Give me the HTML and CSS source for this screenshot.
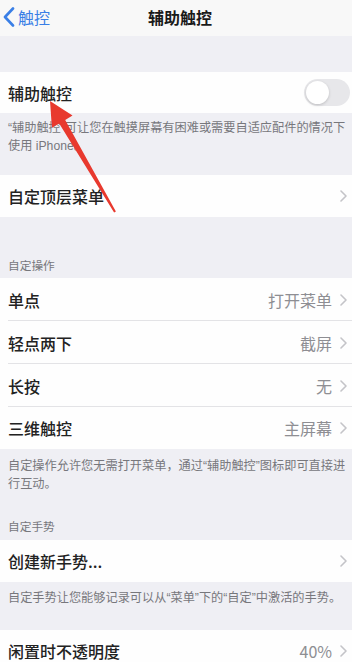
FILE: index.html
```html
<!DOCTYPE html>
<html lang="zh-CN">
<head>
<meta charset="utf-8">
<link rel="stylesheet" href="styles.css">
</head>
<body>
<div class="screen">
  <header class="nav">
    <div class="back">
      <svg class="back-icon" width="12" height="20" viewBox="0 0 12 20"><path d="M10 1.5 L2 10 L10 18.5" fill="none" stroke="#3a7fe6" stroke-width="2.6" stroke-linecap="round" stroke-linejoin="round"/></svg>
      <span>触控</span>
    </div>
    <div class="title">辅助触控</div>
  </header>

  <div class="top-gap"></div>

  <section class="group">
    <div class="row row-first">
      <span class="label">辅助触控</span>
      <span class="toggle"><span class="knob"></span></span>
    </div>
  </section>
  <p class="footer f1">“辅助触控”可让您在触摸屏幕有困难或需要自适应配件的情况下使用 iPhone。</p>

  <section class="group">
    <div class="row">
      <span class="label">自定顶层菜单</span>
      <span class="chev"><svg width="7" height="12" viewBox="0 0 7 12"><path d="M1 1 L6 6 L1 11" fill="none" stroke="#c4c4c8" stroke-width="1.6" stroke-linecap="round" stroke-linejoin="round"/></svg></span>
    </div>
  </section>

  <div class="section-head h1">自定操作</div>
  <section class="group">
    <div class="row sep">
      <span class="label">单点</span>
      <span class="value">打开菜单</span>
      <span class="chev"><svg width="7" height="12" viewBox="0 0 7 12"><path d="M1 1 L6 6 L1 11" fill="none" stroke="#c4c4c8" stroke-width="1.6" stroke-linecap="round" stroke-linejoin="round"/></svg></span>
    </div>
    <div class="row sep">
      <span class="label">轻点两下</span>
      <span class="value">截屏</span>
      <span class="chev"><svg width="7" height="12" viewBox="0 0 7 12"><path d="M1 1 L6 6 L1 11" fill="none" stroke="#c4c4c8" stroke-width="1.6" stroke-linecap="round" stroke-linejoin="round"/></svg></span>
    </div>
    <div class="row sep">
      <span class="label">长按</span>
      <span class="value">无</span>
      <span class="chev"><svg width="7" height="12" viewBox="0 0 7 12"><path d="M1 1 L6 6 L1 11" fill="none" stroke="#c4c4c8" stroke-width="1.6" stroke-linecap="round" stroke-linejoin="round"/></svg></span>
    </div>
    <div class="row">
      <span class="label">三维触控</span>
      <span class="value">主屏幕</span>
      <span class="chev"><svg width="7" height="12" viewBox="0 0 7 12"><path d="M1 1 L6 6 L1 11" fill="none" stroke="#c4c4c8" stroke-width="1.6" stroke-linecap="round" stroke-linejoin="round"/></svg></span>
    </div>
  </section>
  <p class="footer f3">自定操作允许您无需打开菜单，通过“辅助触控”图标即可直接进行互动。</p>

  <div class="section-head h2">自定手势</div>
  <section class="group">
    <div class="row">
      <span class="label">创建新手势...</span>
      <span class="chev"><svg width="7" height="12" viewBox="0 0 7 12"><path d="M1 1 L6 6 L1 11" fill="none" stroke="#c4c4c8" stroke-width="1.6" stroke-linecap="round" stroke-linejoin="round"/></svg></span>
    </div>
  </section>
  <p class="footer f4">自定手势让您能够记录可以从“菜单”下的“自定”中激活的手势。</p>

  <section class="group">
    <div class="row">
      <span class="label">闲置时不透明度</span>
      <span class="value">40%</span>
      <span class="chev"><svg width="7" height="12" viewBox="0 0 7 12"><path d="M1 1 L6 6 L1 11" fill="none" stroke="#c4c4c8" stroke-width="1.6" stroke-linecap="round" stroke-linejoin="round"/></svg></span>
    </div>
  </section>

  <svg class="arrow" width="352" height="662" viewBox="0 0 352 662">
    <polygon points="50,101 72.5,115.6 65.2,119.9 115.9,211.5 114.1,212.5 59.2,123.5 51.9,127.8" fill="#e8392e"/>
  </svg>
</div>
</body>
</html>
```

FILE: styles.css
```css
html, body {
  margin: 0;
  padding: 0;
}
body {
  width: 352px;
  height: 662px;
  overflow: hidden;
  background: #efeff4;
  font-family: "Noto Sans CJK SC", "Noto Sans", sans-serif;
  color: #1a1a1a;
}
.screen {
  position: relative;
  width: 352px;
  height: 662px;
  overflow: hidden;
}
.nav {
  height: 36px;
  background: #f8f8f8;
  display: flex;
  align-items: center;
  justify-content: center;
  position: relative;
}
.back {
  position: absolute;
  left: 3px;
  top: 0;
  height: 33px;
  display: flex;
  align-items: center;
  gap: 3px;
  color: #3a7fe6;
  font-size: 16px;
}
.title {
  font-size: 16px;
  font-weight: 700;
  margin-left: 8px;
  margin-top: -3px;
}
.top-gap {
  height: 36px;
}
.group {
  background: #fefefe;
}
.row {
  height: 42px;
  display: flex;
  align-items: center;
  padding: 0 5px 0 8px;
  position: relative;
  font-size: 16px;
}
.row-first {
  height: 41px;
}
.sep::after {
  content: "";
  position: absolute;
  left: 8px;
  right: 0;
  bottom: 0;
  height: 1px;
  background: #e3e3e6;
}
.row.sep {
  height: 43px;
}
.label {
  flex: 1;
  font-weight: 500;
  color: #222;
}
.value {
  color: #8e8e93;
  margin-right: 8px;
}
.chev {
  display: flex;
  align-items: center;
  width: 7px;
}
.toggle {
  width: 46px;
  height: 27px;
  border-radius: 14px;
  background: #e7e7ea;
  position: relative;
  margin-right: -3px;
}
.knob {
  position: absolute;
  left: 2px;
  top: 2px;
  width: 23px;
  height: 23px;
  border-radius: 50%;
  background: #fff;
  box-shadow: 0 1px 3px rgba(0,0,0,0.18);
}
.footer {
  margin: 0;
  padding: 6px 0 0 8px;
  font-family: "Liberation Sans", "Noto Sans CJK SC", sans-serif;
  font-size: 12.2px;
  line-height: 18px;
  color: #77777c;
  box-sizing: border-box;
}
.f1 { height: 62px; }
.f3 { padding-top: 8px; height: 44px; }
.f4 { padding-top: 7px; height: 48px; }
.section-head {
  font-size: 11.7px;
  line-height: 18px;
  color: #77777c;
  padding: 0 8px 4px;
}
.h1 { padding-top: 39px; }
.h2 { padding-top: 24px; padding-bottom: 5px; }
.arrow {
  position: absolute;
  left: 0;
  top: 0;
  pointer-events: none;
}
```
